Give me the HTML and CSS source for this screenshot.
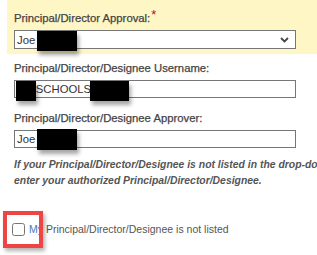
FILE: index.html
```html
<!DOCTYPE html>
<html>
    <head>
        <meta charset="utf-8">
        <title>Principal approval</title>
        <link rel="stylesheet" href="styles.css">
    </head>
    <body>
        <form id="approval">
            <div class="panel">
                <label class="field-label" for="principal">Principal/Director Approval:<span class="req">*</span></label>
                <div class="select-wrap">
                    <select id="principal">
                        <option>Joe</option>
                    </select>
                    <svg class="chevron" width="9" height="6" viewBox="0 0 9 6"><path d="M1 1 L4.5 4.5 L8 1" fill="none" stroke="#444" stroke-width="1.8"/></svg>
                    <span class="redact r-select"></span>
                </div>
            </div>
            <div class="field">
                <label class="field-label" for="username">Principal/Director/Designee Username:</label>
                <div class="input-wrap">
                    <input id="username" value="&nbsp;&nbsp;&nbsp;&nbsp;&nbsp;&nbsp;SCHOOLS\J">
                    <span class="redact r-user1"></span>
                    <span class="redact r-user2"></span>
                </div>
            </div>
            <div class="field">
                <label class="field-label" for="approver">Principal/Director/Designee Approver:</label>
                <div class="input-wrap">
                    <input id="approver" value="Joe">
                    <span class="redact r-approver"></span>
                </div>
            </div>
            <p class="note">If your Principal/Director/Designee is not listed in the drop-down, please<br>enter your authorized Principal/Director/Designee.</p>
            <label class="check">
                <input type="checkbox" id="notlisted">
                <span><span class="my">My</span> Principal/Director/Designee is not listed</span>
                <span class="highlight"></span>
            </label>
        </form>
    </body>
</html>
```

FILE: styles.css
```css
*{
    margin: 0;
    padding: 0;
    box-sizing: border-box;
}
body{
    font-family: "Liberation Sans", Arial, sans-serif;
    font-size: 11.3px;
    color: #444;
    overflow: hidden;
    width: 317px;
    height: 255px;
}
form{
    width: 600px;
}
.panel{
    margin-left: 7px;
    padding: 7px 0 5px 7px;
    background-color: #fff6c6;
}
.field{
    padding-left: 14px;
    margin-top: 6px;
}
.field + .field{
    margin-top: 12px;
}
.field-label{
    display: block;
    line-height: 16px;
    margin-bottom: 4px;
    -webkit-text-stroke: 0.25px #444;
}
.req{
    color: #d0021b;
    font-size: 13px;
    vertical-align: 3px;
    margin-left: 1px;
    -webkit-text-stroke: 0;
}
.select-wrap,.input-wrap{
    position: relative;
    width: 282px;
}
select{
    display: block;
    width: 282px;
    height: 19px;
    border: 1px solid #767676;
    border-radius: 0;
    background: #fff;
    font: 11.3px "Liberation Sans", Arial, sans-serif;
    color: #333;
    padding-left: 2px;
    appearance: none;
    -webkit-appearance: none;
}
.chevron{
    position: absolute;
    right: 7px;
    top: 7px;
}
input:not([type]){
    display: block;
    width: 282px;
    height: 18px;
    border: 1px solid #767676;
    background: #fff;
    font: 11.3px "Liberation Sans", Arial, sans-serif;
    color: #333;
    padding-left: 2px;
    outline: none;
}
.redact{
    position: absolute;
    background: #000;
    box-shadow: 2px 4px 4px rgba(0,0,0,0.35);
}
.r-select{
    left: 23px;
    top: 1px;
    width: 40px;
    height: 20px;
}
.r-user1{
    left: 2px;
    top: 1px;
    width: 20px;
    height: 20px;
}
.r-user2{
    left: 76px;
    top: 1px;
    width: 39px;
    height: 20px;
}
.r-approver{
    left: 23px;
    top: -1px;
    width: 40px;
    height: 21px;
}
.note{
    padding-left: 14px;
    margin-top: 9px;
    line-height: 16px;
    font-style: italic;
    font-weight: bold;
    font-size: 10.4px;
    color: #555;
    white-space: nowrap;
}
.check{
    position: relative;
    display: flex;
    align-items: center;
    margin-top: 32px;
    padding-left: 12px;
    line-height: 16px;
    font-size: 10.5px;
    color: #555;
}
.check input{
    width: 13px;
    height: 13px;
    margin-right: 4px;
}
.my{
    color: #4a78b8;
}
.highlight{
    position: absolute;
    left: 3px;
    top: -10px;
    width: 40px;
    height: 37px;
    border: 4px solid #ee4444;
    box-shadow: 2px 3px 4px rgba(0,0,0,0.3);
}
```
